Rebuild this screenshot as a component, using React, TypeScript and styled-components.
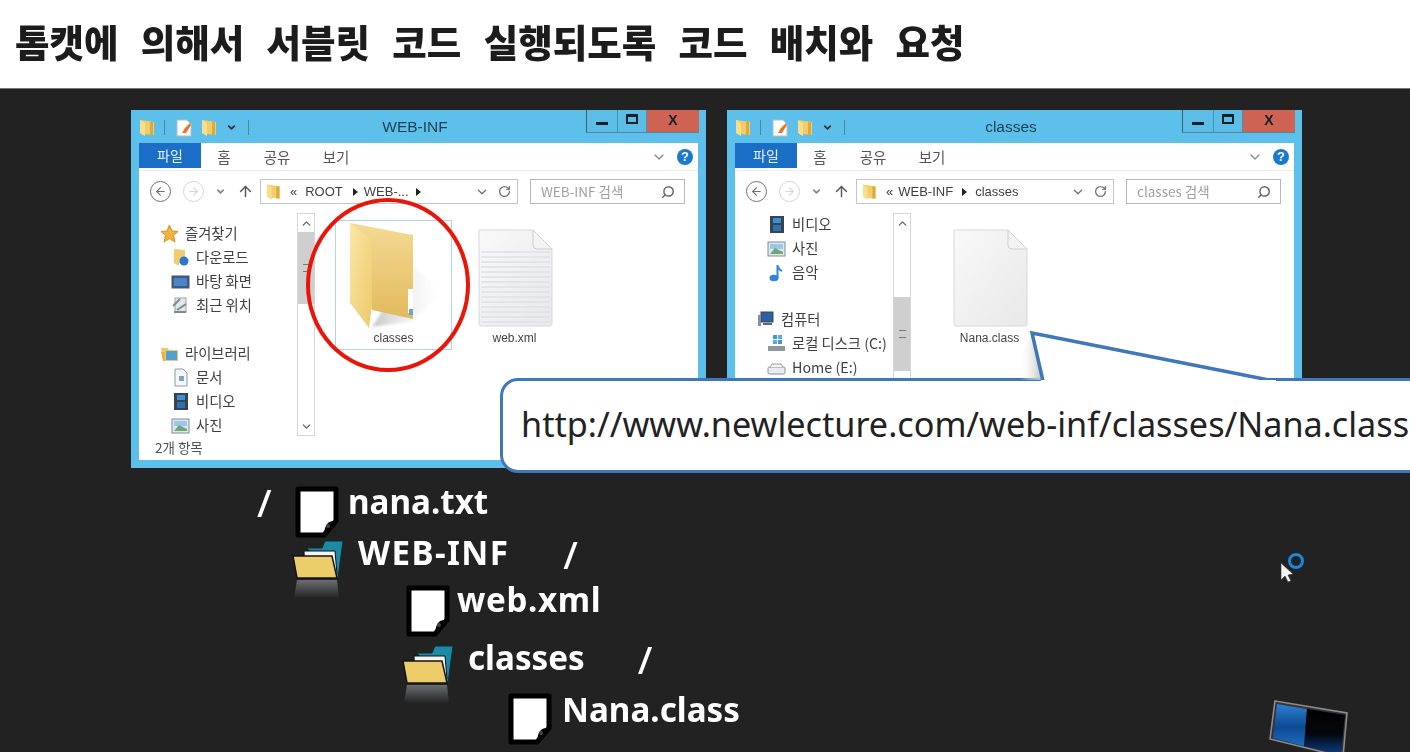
import React from "react";
import styled, { createGlobalStyle } from "styled-components";
import { ArrowLeft, ArrowRight, ArrowUp, ChevronDown, ChevronUp, RotateCw, Search } from "lucide-react";

const KO = `"Noto Sans CJK KR", "Noto Sans", sans-serif`;
const Global = createGlobalStyle`
  html, body { margin: 0; padding: 0; background: #fff; overflow: hidden; }
  #root { width: 1410px; height: 755px; }
  * { box-sizing: border-box; }
`;

const Page = styled.div`
  width: 1410px; height: 755px; display: flex; flex-direction: column;
  background: #fff; font-family: ${KO};
`;
const Header = styled.header`
  height: 88px; flex: none; display: flex; align-items: center; padding: 0 0 7px 15px;
`;
const Heading = styled.h1`
  margin: 0; font: 900 37.5px/1 ${KO}; color: #1c1c1c; white-space: nowrap;
  word-spacing: 13.7px; filter: blur(0.7px);
`;
const Slide = styled.main`
  position: relative; flex: none; height: 664px; background: #222222;
  border-top: 1px solid #777; overflow: hidden;
`;
const Footer = styled.div`flex: 1; background: #fff;`;

/* Explorer window */
const Win = styled.section<{ $left: number }>`
  position: absolute; left: ${p => p.$left}px; top: 21px; width: 575px; height: 358px;
  background: #5cc0eb; padding: 0 8px 8px; display: flex; flex-direction: column;
  filter: blur(0.7px);
`;
const TitleBar = styled.div`
  height: 33px; flex: none; display: grid; grid-template-columns: 1fr auto 1fr; margin-left: -8px;
  padding-left: 8px; padding-right: 7px; margin-right: -8px; align-items: start;
`;
const Quick = styled.div`display: flex; align-items: center; height: 33px; padding-top: 2px; margin-left: 0;`;
const QuickSep = styled.span<{ $ml: number; $mr: number }>`
  width: 1px; height: 15px; background: #5f8191; margin: 0 ${p => p.$mr}px 0 ${p => p.$ml}px;
`;
const QuickGap = styled.span`width: 9px; flex: none;`;
const WinTitle = styled.div`
  font: 15.5px/33px "Liberation Sans", sans-serif; color: #1f3f50; margin-right: 8px;
`;
const Controls = styled.div`
  justify-self: end; display: flex; height: 23px;
  border-left: 1px solid #3d6073; border-bottom: 1px solid #4c8aa8;
`;
const Ctl = styled.div<{ $w: number; $close?: boolean }>`
  width: ${p => p.$w}px; display: flex; align-items: center; justify-content: center;
  background: ${p => p.$close ? "#cf6353" : "#5cbde6"};
  border-right: ${p => p.$close ? "none" : "1px solid #4d91b0"};
  color: #10202a; font: 900 14px/1 "Liberation Sans", sans-serif; padding-bottom: ${p => p.$close ? 3 : 0}px;
`;
const MinBar = styled.span`width: 12px; height: 3px; background: #10202a; margin-top: 4px;`;
const MaxBox = styled.span`width: 12px; height: 10px; border: 2px solid #10202a; border-top-width: 3px; margin-bottom: 4px;`;
const Ribbon = styled.div`
  height: 28px; flex: none; background: #fff; display: flex; align-items: flex-start; padding-right: 4px;
  border-bottom: 1px solid #eeeeee;
`;
const FileTab = styled.div`
  width: 62px; height: 25px; background: #1a6ec6; color: #e6f0fa; text-align: center;
  font: 14px/25px ${KO};
`;
const RibbonTab = styled.div<{ $w: number }>`
  width: ${p => p.$w}px; text-align: center; font: 14.5px/27px ${KO}; color: #555;
`;
const RibbonSpacer = styled.div`flex: 1;`;
const HelpDot = styled.div`
  width: 16px; height: 16px; border-radius: 50%; background: #1a78d0; color: #fff; margin: 6px 1px 0 10px;
  font: 700 13px/16px "Liberation Sans", sans-serif; text-align: center;
`;
const ChevronWrap = styled.div`margin-top: 6px; color: #8a8a8a; display: flex;`;
const AddressRow = styled.div`
  height: 42px; flex: none; background: #fff; display: flex; align-items: flex-start; padding-top: 8px;
`;
const NavBtn = styled.div<{ $w: number; $c: string }>`
  width: ${p => p.$w}px; height: 22px; margin-top: 1px; flex: none; color: ${p => p.$c};
  display: flex; align-items: center; justify-content: center;
`;
const RoundBtn = styled.div<{ $c: string; $ml: number }>`
  width: 21px; height: 21px; border-radius: 50%; border: 1.5px solid ${p => p.$c}; color: ${p => p.$c};
  display: flex; align-items: center; justify-content: center; flex: none; margin: 2px 0 0 ${p => p.$ml}px;
`;
const AddressBox = styled.div`
  width: 258px; height: 25px; flex: none; margin-left: 6px; border: 1.5px solid #c4c4c4; display: flex; align-items: center;
  padding: 0 6px 0 5px; font: 13px/1 "Liberation Sans", ${KO}; color: #3f3f3f; white-space: nowrap;
`;
const Crumb = styled.span<{ $ml: number }>`margin-left: ${p => p.$ml}px;`;
const Tri = styled.span<{ $ml: number }>`
  margin-left: ${p => p.$ml}px; width: 0; height: 0; flex: none;
  border-left: 5px solid #222; border-top: 4px solid transparent; border-bottom: 4px solid transparent;
`;
const AddrEnd = styled.div`margin-left: auto; display: flex; gap: 9px; align-items: center; color: #777;`;
const SearchBox = styled.div`
  width: 155px; height: 25px; margin-left: 12px; flex: none; border: 1.5px solid #b8b8b8; display: flex;
  align-items: center; justify-content: space-between; padding: 0 9px 0 10px;
  font: 13.5px/1 ${KO}; color: #a0a0a0; white-space: nowrap;
`;
const SearchIcon = styled(Search)`color: #666; transform: scaleX(-1);`;
const Body = styled.div`
  flex: 1; min-height: 0; background: #fff; display: flex; align-items: flex-start; position: relative;
`;
const NavPane = styled.nav<{ $top: number }>`
  width: 158px; flex: none; padding-top: ${p => p.$top}px; display: flex; flex-direction: column;
  margin-top: ${p => p.$top === 0 ? "-1px" : "0"};
`;
const NavRow = styled.div<{ $indent: number; $h?: number }>`
  height: ${p => p.$h ?? 24}px; display: flex; align-items: center; gap: 6px; padding-left: ${p => p.$indent}px;
  font: 14.3px/1 ${KO}; color: #404040; white-space: nowrap;
`;
const Scroll = styled.div`
  width: 18px; height: 223px; flex: none; border: 1px solid #d6d6d6; display: flex; flex-direction: column;
  background: #fff; color: #666;
`;
const ScrollBtn = styled.div`height: 18px; flex: none; display: flex; align-items: center; justify-content: center; background: #fff;`;
const ScrollTrack = styled.div<{ $before: number }>`flex: 1; padding-top: ${p => p.$before}px;`;
const Thumb = styled.div<{ $h: number }>`
  height: ${p => p.$h}px; background: #cfcfcf; display: flex; align-items: center; justify-content: center;
  &::after { content: ""; width: 7px; height: 6px; border-top: 1px solid #777; border-bottom: 1px solid #777; }
`;
const Files = styled.div`flex: 1; display: flex; gap: 4px; padding: 7px 0 0 20px;`;
const Tile = styled.div<{ $sel?: boolean }>`
  width: 117px; height: 130px; display: flex; flex-direction: column; align-items: center;
  border: 1px solid ${p => p.$sel ? "#b6d2ee" : "transparent"};
`;
const TileIcon = styled.div`height: 109px; display: flex; justify-content: center;`;
const TileLabel = styled.div`font: 12px/16px "Liberation Sans", sans-serif; color: #444;`;
const Status = styled.div`
  height: 24px; flex: none; background: #fff; padding-left: 16px; font: 13.5px/22px ${KO}; color: #505050;
`;

/* overlay */
const RedRing = styled.svg`position: absolute; left: 304px; top: 106px; filter: blur(0.4px);`;
const Callout = styled.div`
  position: absolute; left: 500px; top: 289px; width: 930px; height: 95px; background: #fff;
  border: 3.5px solid #3f78b8; border-radius: 18px; filter: blur(0.4px);
  display: flex; align-items: center; padding: 0 0 2px 18px;
`;
const CalloutTail = styled.svg`position: absolute; left: 513px; top: -55px; overflow: visible;`;
const Url = styled.span`font: 34.2px/1 "Noto Sans", sans-serif; color: #222; white-space: nowrap;`;

/* tree */
const Tree = styled.div`position: absolute; left: 0; top: 397px; display: flex; flex-direction: column;`;
const TreeRow = styled.div<{ $indent: number; $h: number }>`
  height: ${p => p.$h}px; margin-left: ${p => p.$indent}px; display: flex; align-items: flex-start;
`;
const TreeLabel = styled.span<{ $ml: number; $mt: number; $ls?: number }>`
  margin: ${p => p.$mt}px 0 0 ${p => p.$ml}px; font: 700 33.2px/36px "Noto Sans", sans-serif; color: #fff;
  letter-spacing: ${p => p.$ls ?? 0}px; white-space: nowrap; filter: blur(0.6px);
`;
const Slash = styled.span<{ $ml?: number; $w?: number; $mt: number }>`
  width: ${p => p.$w ?? 16}px; margin: ${p => p.$mt}px 0 0 ${p => p.$ml ?? 0}px; flex: none;
  font: 500 38px/36px "Noto Sans", sans-serif; color: #fff; filter: blur(0.5px);
`;
const TreeSvg = styled.svg`flex: none;`;
const Pointer = styled.svg`position: absolute; left: 1276px; top: 459px;`;
const Monitor = styled.svg`position: absolute; left: 1265px; top: 608px; filter: blur(0.4px);`;

/* drawings */
const MiniFolder = ({ w = 16, h = 18 }: { w?: number; h?: number }) => (
  <svg width={w} height={h} viewBox="0 0 16 18">
    <path d="M1 1 L15 3 V16 L6 15 V17 L1 14Z" fill="#f0cd6a" />
    <path d="M1 1 L6 4 V17 L1 14Z" fill="#f7dd90" />
    <path d="M11 3 H14 V16 H11Z" fill="#dca93e" />
  </svg>
);
const NoteIcon = () => (
  <svg width="16" height="18" viewBox="0 0 16 18">
    <path d="M1 1 H11 L15 5 V17 H1Z" fill="#fff" stroke="#bbb" />
    <path d="M6 14 L9 9 L14 4 L15 6 L10 14Z" fill="#e8742c" />
  </svg>
);
const Icon = ({ k }: { k: string }) => {
  const p = { width: 19, height: 19, viewBox: "0 0 19 19" };
  switch (k) {
    case "star": return <svg {...p}><path d="M9.5 1 L12 7 L18 7.5 L13.5 11.5 L15 18 L9.5 14.5 L4 18 L5.5 11.5 L1 7.5 L7 7Z" fill="#f2b33d" stroke="#d98c1f" /></svg>;
    case "down": return <svg {...p}><path d="M3 1 L14 2 V15 L8 15 V18 L3 15Z" fill="#efcb72" /><circle cx="13" cy="13" r="4.5" fill="#2a77c9" /></svg>;
    case "desk": return <svg {...p}><rect x="1" y="4" width="17" height="12" fill="#2f5f98" stroke="#555" /><rect x="3" y="6" width="13" height="8" fill="#4d86c8" /></svg>;
    case "recent": return <svg {...p}><rect x="4" y="2" width="11" height="14" fill="#e3e7ea" stroke="#98a0a6" /><path d="M2 10 L9 3 M6 14 L15 8 M3 16 H15" stroke="#7d8a93" strokeWidth="2" /></svg>;
    case "lib": return <svg {...p}><path d="M1 4 H8 L9 6 H18 V17 H3Z" fill="#f0c85f" /><rect x="6" y="7" width="11" height="9" fill="#4fa0d8" /><path d="M1 8 H5 V17 H3Z" fill="#e8b341" /></svg>;
    case "doc": return <svg {...p}><path d="M4 1 H12 L16 5 V18 H4Z" fill="#f4f6f8" stroke="#8d99a3" /><rect x="8" y="8" width="5" height="5" fill="#7fa4c4" /></svg>;
    case "video": return <svg {...p}><rect x="3" y="1" width="14" height="17" fill="#38434d" /><rect x="6" y="3" width="8" height="5" fill="#3b8fd3" /><rect x="6" y="10" width="8" height="6" fill="#2a72b8" /></svg>;
    case "pic": return <svg {...p}><rect x="1" y="3" width="17" height="14" fill="#dfe7ef" stroke="#7f8c99" /><rect x="3" y="5" width="13" height="5" fill="#9cc7ea" /><path d="M3 15 L8 9 L16 13 V15Z" fill="#6fa67a" /></svg>;
    case "music": return <svg {...p}><ellipse cx="7" cy="15" rx="4.5" ry="3.3" fill="#2f86d6" /><path d="M10.5 15 V2 Q11 6 15 8" fill="none" stroke="#2f86d6" strokeWidth="2" /></svg>;
    case "pc": return <svg {...p}><rect x="5" y="2" width="12" height="10" fill="#2a5fae" stroke="#444" /><path d="M2 5 V16 H5 V5Z" fill="#8a8f95" /><rect x="7" y="13" width="9" height="2" fill="#666" /></svg>;
    case "disk": return <svg {...p}><rect x="6" y="1" width="4" height="4" fill="#3f97dc" /><rect x="11" y="1" width="4" height="4" fill="#52abe6" /><rect x="6" y="6" width="4" height="4" fill="#52abe6" /><rect x="11" y="6" width="4" height="4" fill="#3f97dc" /><rect x="1" y="12" width="17" height="5" fill="#8f979d" /></svg>;
    default: return <svg {...p}><rect x="1" y="9" width="17" height="7" rx="1.5" fill="#e9ecee" stroke="#8a8f95" /><path d="M3 9 L5 6 H14 L16 9" fill="#f4f4f4" stroke="#9a9a9a" /></svg>;
  }
};
const BigFolder = () => (
  <svg width="112" height="109" viewBox="0 0 112 109">
    <defs>
      <linearGradient id="bfBack" x1="0" y1="0" x2="0" y2="1"><stop offset="0" stopColor="#f4da92" /><stop offset="1" stopColor="#e2ba5e" /></linearGradient>
      <linearGradient id="bfFlap" x1="0" y1="0" x2="1" y2="1"><stop offset="0" stopColor="#fbe7a8" /><stop offset="1" stopColor="#edc96a" /></linearGradient>
      <linearGradient id="bfSh" x1="0" y1="0" x2="1" y2="0"><stop offset="0" stopColor="#c4c4c4" /><stop offset="1" stopColor="#fff" stopOpacity="0.1" /></linearGradient>
    </defs>
    <path d="M74 44 L106 72 L74 100 L34 106 Z" fill="url(#bfSh)" filter="blur(1.5px)" />
    <path d="M12 2 L75 14 L75 98 L34 89 Z" fill="url(#bfBack)" />
    <path d="M12 2 L34 19 L34 84 L31 107 L12 82 Z" fill="url(#bfFlap)" />
    <rect x="70" y="68" width="5" height="24" fill="#fff" />
    <rect x="71" y="88" width="4" height="6" fill="#6fa3d8" />
  </svg>
);
const PageDoc = ({ lined }: { lined?: boolean }) => (
  <svg width="76" height="109" viewBox="0 0 76 109">
    <defs>
      <linearGradient id="docG" x1="0" y1="0" x2="1" y2="1"><stop offset="0" stopColor="#f9f9f9" /><stop offset="1" stopColor="#e8e8e8" /></linearGradient>
    </defs>
    <path d="M2 9 H56 L75 28 V103 Q75 105 73 105 H4 Q2 105 2 103 Z" fill="url(#docG)" stroke="#d8d8d8" />
    <path d="M56 9 V24 Q56 28 60 28 H75 Z" fill="#f3f3f3" stroke="#cfcfcf" />
    {lined && Array.from({ length: 15 }, (_, i) => (
      <line key={i} x1="4" x2="73" y1={31 + i * 5} y2={31 + i * 5} stroke="#dde1e8" strokeWidth="1.3" />
    ))}
  </svg>
);
const TreeDoc = () => (
  <TreeSvg width="44" height="52" viewBox="0 0 44 52">
    <path d="M3 3 H41 V35 L29 49 H3 Z" fill="#fff" stroke="#000" strokeWidth="5" strokeLinejoin="round" />
    <path d="M40 35 Q30 34 29 48 L41 36 Z" fill="#000" />
    <circle cx="33" cy="40" r="2" fill="#444" />
  </TreeSvg>
);
const TreeFolder = () => (
  <TreeSvg width="54" height="62" viewBox="0 0 54 62">
    <defs>
      <linearGradient id="refl" x1="0" y1="0" x2="0" y2="1"><stop offset="0" stopColor="#6b6d70" /><stop offset="1" stopColor="#232323" /></linearGradient>
    </defs>
    <path d="M16 8 H31 L34 1 H52 L47 38 H38 Z" fill="#1b8aa3" stroke="#0d2d36" />
    <path d="M13 11 H44 L46 34 H14 Z" fill="#f4f4f4" stroke="#111" />
    <path d="M2 16 H41 L46 38 H6 Z" fill="#edcd6a" stroke="#151515" strokeWidth="1.5" />
    <path d="M6 40 H46 L48 58 H3 Z" fill="url(#refl)" />
  </TreeSvg>
);

type NavItem = { k?: string; t?: string; i?: number; h?: number };
const Window = ({ left, title, crumbs, search, top, nav, thumbBefore, thumbH, status, children }: {
  left: number; title: string; crumbs: React.ReactNode; search: string; top: number; nav: NavItem[];
  thumbBefore: number; thumbH: number; status?: string; children: React.ReactNode;
}) => (
  <Win $left={left}>
    <TitleBar>
      <Quick>
        <MiniFolder />
        <QuickSep $ml={9} $mr={11} />
        <NoteIcon />
        <QuickGap />
        <MiniFolder />
        <QuickGap />
        <ChevronDown size={11} strokeWidth={4} color="#333" />
        <QuickSep $ml={11} $mr={0} />
      </Quick>
      <WinTitle>{title}</WinTitle>
      <Controls>
        <Ctl $w={31}><MinBar /></Ctl>
        <Ctl $w={29}><MaxBox /></Ctl>
        <Ctl $w={52} $close>X</Ctl>
      </Controls>
    </TitleBar>
    <Ribbon>
      <FileTab>파일</FileTab>
      <RibbonTab $w={46}>홈</RibbonTab>
      <RibbonTab $w={60}>공유</RibbonTab>
      <RibbonTab $w={58}>보기</RibbonTab>
      <RibbonSpacer />
      <ChevronWrap><ChevronDown size={16} /></ChevronWrap>
      <HelpDot>?</HelpDot>
    </Ribbon>
    <AddressRow>
      <RoundBtn $c="#707070" $ml={11}><ArrowLeft size={13} /></RoundBtn>
      <RoundBtn $c="#d5d5d5" $ml={12}><ArrowRight size={13} /></RoundBtn>
      <NavBtn $w={32} $c="#888"><ChevronDown size={11} strokeWidth={4} /></NavBtn>
      <NavBtn $w={18} $c="#555"><ArrowUp size={17} /></NavBtn>
      <AddressBox>
        <MiniFolder w={15} h={18} />
        {crumbs}
        <AddrEnd>
          <ChevronDown size={14} strokeWidth={2.5} />
          <RotateCw size={13} strokeWidth={2.5} />
        </AddrEnd>
      </AddressBox>
      <SearchBox>
        {search}
        <SearchIcon size={14} strokeWidth={2.5} />
      </SearchBox>
    </AddressRow>
    <Body>
      <NavPane $top={top}>
        {nav.map((n, i) => (
          <NavRow key={i} $indent={n.i ?? 0} $h={n.h}>
            {n.k && <Icon k={n.k} />}
            {n.t}
          </NavRow>
        ))}
      </NavPane>
      <Scroll>
        <ScrollBtn><ChevronUp size={13} strokeWidth={2.5} /></ScrollBtn>
        <ScrollTrack $before={thumbBefore}><Thumb $h={thumbH} /></ScrollTrack>
        <ScrollBtn><ChevronDown size={13} strokeWidth={2.5} /></ScrollBtn>
      </Scroll>
      <Files>{children}</Files>
    </Body>
    <Status>{status}</Status>
  </Win>
);

export default function App() {
  return (
    <Page>
      <Global />
      <Header>
        <Heading>톰캣에 의해서 서블릿 코드 실행되도록 코드 배치와 요청</Heading>
      </Header>
      <Slide>
        <Window
          left={131}
          title="WEB-INF"
          search="WEB-INF 검색"
          top={8}
          thumbBefore={0}
          thumbH={72}
          status="2개 항목"
          crumbs={<>
            <Crumb $ml={9}>«</Crumb><Crumb $ml={8}>ROOT</Crumb><Tri $ml={10} /><Crumb $ml={6}>WEB-...</Crumb><Tri $ml={7} />
          </>}
          nav={[
            { k: "star", t: "즐겨찾기", i: 21 },
            { k: "down", t: "다운로드", i: 32 },
            { k: "desk", t: "바탕 화면", i: 32 },
            { k: "recent", t: "최근 위치", i: 32 },
            {},
            { k: "lib", t: "라이브러리", i: 21 },
            { k: "doc", t: "문서", i: 32 },
            { k: "video", t: "비디오", i: 32 },
            { k: "pic", t: "사진", i: 32 },
          ]}
        >
          <Tile $sel>
            <TileIcon><BigFolder /></TileIcon>
            <TileLabel>classes</TileLabel>
          </Tile>
          <Tile>
            <TileIcon><PageDoc lined /></TileIcon>
            <TileLabel>web.xml</TileLabel>
          </Tile>
        </Window>
        <Window
          left={727}
          title="classes"
          search="classes 검색"
          top={0}
          thumbBefore={65}
          thumbH={74}
          crumbs={<>
            <Crumb $ml={9}>«</Crumb><Crumb $ml={5}>WEB-INF</Crumb><Tri $ml={9} /><Crumb $ml={8}>classes</Crumb>
          </>}
          nav={[
            { k: "video", t: "비디오", i: 32 },
            { k: "pic", t: "사진", i: 32 },
            { k: "music", t: "음악", i: 32 },
            { h: 23 },
            { k: "pc", t: "컴퓨터", i: 21 },
            { k: "disk", t: "로컬 디스크 (C:)", i: 32 },
            { k: "drive", t: "Home (E:)", i: 32 },
          ]}
        >
          <Tile>
            <TileIcon><PageDoc /></TileIcon>
            <TileLabel>Nana.class</TileLabel>
          </Tile>
        </Window>

        <RedRing width="170" height="180" viewBox="0 0 170 180">
          <ellipse cx="84" cy="90" rx="80" ry="85" fill="none" stroke="#ea1409" strokeWidth="4" />
        </RedRing>

        <Callout>
          <CalloutTail width="280" height="60" viewBox="0 0 280 60">
            <defs>
              <linearGradient id="tailSh" x1="0" y1="0" x2="1" y2="0"><stop offset="0" stopColor="#fff" stopOpacity="0" /><stop offset="1" stopColor="#bdbdbd" /></linearGradient>
            </defs>
            <path d="M4 30 L16 8 L26 54 H4 Z" fill="url(#tailSh)" />
            <path d="M16 7 L27 55 H252 Z" fill="#fff" />
            <path d="M27 55 L16 7 L258 55" fill="none" stroke="#3f78b8" strokeWidth="3.5" strokeLinejoin="miter" />
            <rect x="25" y="54" width="235" height="8" fill="#fff" />
          </CalloutTail>
          <Url>http://www.newlecture.com/web-inf/classes/Nana.class</Url>
        </Callout>

        <Tree>
          <TreeRow $indent={257} $h={54}>
            <Slash $w={38} $mt={-2}>/</Slash>
            <TreeDoc />
            <TreeLabel $ml={9} $mt={-2}>nana.txt</TreeLabel>
          </TreeRow>
          <TreeRow $indent={291} $h={45}>
            <TreeFolder />
            <TreeLabel $ml={13} $mt={-5} $ls={1.4}>WEB-INF</TreeLabel>
            <Slash $ml={54} $mt={-4}>/</Slash>
          </TreeRow>
          <TreeRow $indent={406} $h={60}>
            <TreeDoc />
            <TreeLabel $ml={7} $mt={-3} $ls={0.6}>web.xml</TreeLabel>
          </TreeRow>
          <TreeRow $indent={401} $h={48}>
            <TreeFolder />
            <TreeLabel $ml={13} $mt={-5}>classes</TreeLabel>
            <Slash $ml={53} $mt={-4}>/</Slash>
          </TreeRow>
          <TreeRow $indent={508} $h={52}>
            <TreeDoc />
            <TreeLabel $ml={10} $mt={-1}>Nana.class</TreeLabel>
          </TreeRow>
        </Tree>

        <Pointer width="32" height="36" viewBox="0 0 32 36">
          <circle cx="20" cy="13" r="6.5" fill="none" stroke="#1b86dc" strokeWidth="3" />
          <path d="M5 15 V32 L9 28 L12 34 L15 33 L12 27 L17 26 Z" fill="#f4f4f4" stroke="#333" strokeWidth="0.6" />
        </Pointer>

        <Monitor width="90" height="56" viewBox="0 0 90 56">
          <defs>
            <linearGradient id="monB" x1="0" y1="0" x2="0" y2="1"><stop offset="0" stopColor="#2e7fd0" /><stop offset="0.55" stopColor="#0c4a92" /><stop offset="1" stopColor="#1d6cc4" /></linearGradient>
            <linearGradient id="monK" x1="0" y1="0" x2="0" y2="1"><stop offset="0" stopColor="#000" /><stop offset="0.55" stopColor="#05080f" /><stop offset="1" stopColor="#0a3f8a" /></linearGradient>
          </defs>
          <path d="M10 4 L82 16 L78 60 L5 42 Z" fill="#333" stroke="#8b8b8b" strokeWidth="1.6" />
          <path d="M12 7 L42 12 L39 49 L8 41 Z" fill="url(#monB)" />
          <path d="M42 12 L80 18 L76 58 L39 49 Z" fill="url(#monK)" />
        </Monitor>
      </Slide>
      <Footer />
    </Page>
  );
}
